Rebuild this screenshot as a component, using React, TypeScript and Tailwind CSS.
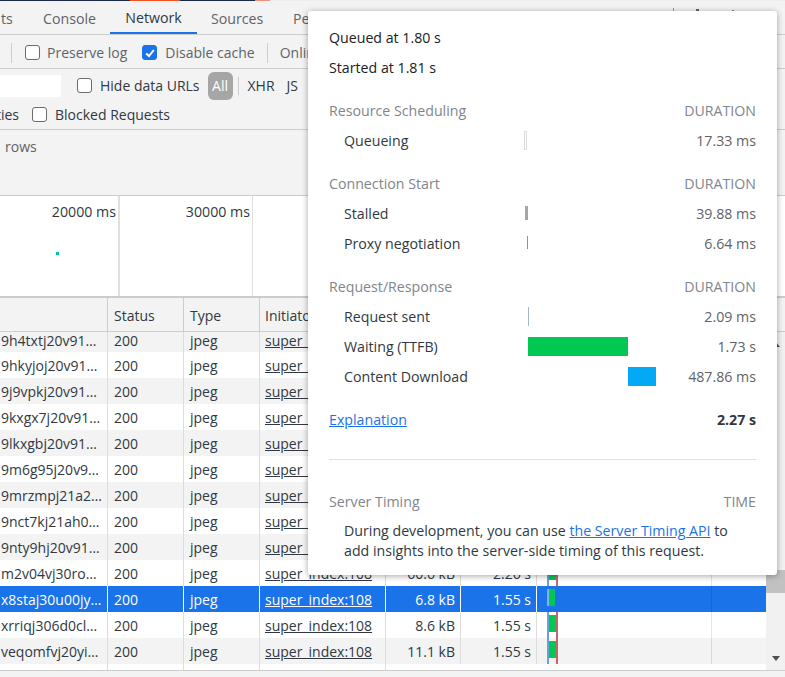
const rows = [
  { name: '9h4txtj20v91…', size: '', time: '' },
  { name: '9hkyjoj20v91…' },
  { name: '9j9vpkj20v91…' },
  { name: '9kxgx7j20v91…' },
  { name: '9lkxgbj20v91…' },
  { name: '9m6g95j20v9…' },
  { name: '9mrzmpj21a2…' },
  { name: '9nct7kj21ah0…' },
  { name: '9nty9hj20v91…' },
  { name: 'm2v04vj30ro…', size: '60.6 kB', time: '2.26 s' },
  { name: 'x8staj30u00jy…', size: '6.8 kB', time: '1.55 s', selected: true },
  { name: 'xrriqj306d0cl…', size: '8.6 kB', time: '1.55 s' },
  { name: 'veqomfvj20yi…', size: '11.1 kB', time: '1.55 s' },
];

function TableRow({ row, index }: { row: (typeof rows)[number]; index: number }) {
  const selected = row.selected;
  const bg = selected ? 'bg-[#1a73e8] text-white' : index % 2 === 0 ? 'bg-[#f3f3f3] text-[#303942]' : 'bg-white text-[#303942]';
  const line = selected ? 'border-white' : 'border-[#ddd]';
  // first row is scrolled partly under the header
  const height = index === 0 ? 'h-[20px] leading-[18px]' : 'h-[26px] leading-[28px]';

  return (
    <div className={`flex overflow-hidden text-[14px] ${height} ${bg}`}>
      <div className={`h-full w-[108px] truncate border-r ${line} pl-px`}>{row.name}</div>
      <div className={`h-full w-[76px] border-r ${line} pl-[6px]`}>200</div>
      <div className={`h-full w-[76px] border-r ${line} pl-[6px]`}>jpeg</div>
      <div className={`h-full w-[126px] border-r ${line} pl-[5px] underline`}>super_index:108</div>
      <div className={`h-full w-[75px] border-r ${line} pr-[5px] text-right`}>{row.size}</div>
      <div className={`h-full w-[76px] border-r ${line} pr-[5px] text-right`}>{row.time}</div>
      <div className="relative h-full w-[229px]">
        {selected ? (
          <>
            <div className="absolute top-[3px] left-[10px] h-[17px] w-[2px] bg-[#7fb2ee]" />
            <div className="absolute top-[3px] left-[12px] h-[17px] w-[6px] bg-[#00c853]" />
          </>
        ) : (
          <>
            <div className="absolute top-[3px] left-[11px] h-[17px] w-[7px] bg-[#00c853]" />
            <div className="absolute top-[3px] left-[18px] h-[17px] w-px bg-[#03a9f4]" />
            <div className="absolute inset-y-0 left-[10px] w-[2px] bg-[#6a9fdc]" />
            <div className="absolute inset-y-0 left-[19px] w-[2px] bg-[#c9636b]" />
          </>
        )}
        <div className="absolute inset-y-0 left-[174px] w-px bg-black/10" />
      </div>
    </div>
  );
}

function Timing({ label, value, bar }: { label: string; value: string; bar: string }) {
  return (
    <div className="flex h-[30px] items-center">
      <div className="w-[196px] pl-[15px] pt-[2px]">{label}</div>
      <div className="h-[19px] w-[140px]">
        <div className={`h-full ${bar}`} />
      </div>
      <div className="flex-1 pt-[2px] text-right text-[#5f6368]">{value}</div>
    </div>
  );
}

function Section({ title, right = 'DURATION' }: { title: string; right?: string }) {
  return (
    <div className="flex h-[30px] items-center pt-[2px] text-[#80868b]">
      <div className="flex-1">{title}</div>
      <div>{right}</div>
    </div>
  );
}

function Box({ checked }: { checked?: boolean }) {
  return (
    <span className={`mr-[8px] flex h-[15px] w-[15px] shrink-0 items-center justify-center rounded-[3px] border ${checked ? 'border-[#1a73e8] bg-[#1a73e8]' : 'border-[#6b6b6b] bg-white'}`}>
      {checked && (
        <svg viewBox="0 0 12 12" className="h-[12px] w-[12px]">
          <path d="M2.2 6.4 5 9l4.8-6" fill="none" stroke="white" strokeWidth="2" />
        </svg>
      )}
    </span>
  );
}

export default function App() {
  return (
    <div className="relative h-[677px] w-[785px] overflow-hidden bg-[#f3f3f3] font-['Open_Sans','Noto_Sans',sans-serif] text-[14.2px] text-[#303942]">
      <div className="flex h-px bg-[#eeeef2]">
        <div className="w-[130px] bg-[#1b2a4a]" />
        <div className="w-[50px] bg-[#f4511e]" />
        <div className="w-[75px] bg-[#1b2a4a]" />
        <div className="w-[15px] bg-[#f0907a]" />
      </div>

      <div className="relative flex h-[34px] items-center border-b border-[#ccc] pt-[2px] text-[#5f6368]">
        <span className="w-[43px] pl-px">ts</span>
        <span className="w-[67px]">Console</span>
        <span className="flex h-full w-[87px] items-center justify-center border-b-[2px] border-[#1a73e8] text-[#303942]">Network</span>
        <span className="ml-[14px] w-[82px]">Sources</span>
        <span>Performance</span>
        <span className="absolute top-[7px] left-[673px] h-[3px] w-px bg-[#999]" />
        <span className="absolute top-[8px] left-[696px] h-[2px] w-[3px] bg-[#666]" />
        <span className="absolute top-[9px] left-[732px] h-px w-[2px] bg-[#888]" />
      </div>

      <div className="flex h-[34px] items-center border-b border-[#ccc] pt-[2px] text-[14px] text-[#5f6368]">
        <span className="mr-[13px] ml-[11px] h-[20px] w-px bg-[#ccc]" />
        <Box />
        <span className="-ml-px">Preserve log</span>
        <span className="w-[15px]" />
        <Box checked />
        <span>Disable cache</span>
        <span className="mx-[12px] h-[20px] w-px bg-[#ccc]" />
        <span>Online</span>
      </div>

      <div className="flex h-[33px] items-center text-[14px]">
        <div className="mr-[16px] h-[22px] w-[61px] bg-white" />
        <Box />
        <span>Hide data URLs</span>
        <span className="mr-[5px] ml-[8px] flex h-[28px] w-[25px] items-center justify-center rounded-[6px] bg-[#a6a6a6] text-white">All</span>
        <span className="mr-[9px] h-[18px] w-px bg-[#ccc]" />
        <span className="mr-[12px]">XHR</span>
        <span>JS</span>
      </div>

      <div className="flex h-[28px] items-center border-b border-[#ccc] pb-[3px] text-[14px]">
        <span className="mr-[13px] flex w-[19px] justify-end overflow-hidden whitespace-nowrap">ties</span>
        <Box />
        <span>Blocked Requests</span>
      </div>

      <div className="h-[66px] border-b border-[#ccc] pl-[5px] pt-[6px] text-[14px] text-[#5f6368]">rows</div>

      <div className="flex h-[102px] border-b-[2px] border-[#ccc] bg-white">
        <div className="relative w-[120px] border-r-[2px] border-[#e0e0e0] pr-[2px] pt-[5px] text-right">
          20000 ms
          <span className="absolute top-[56px] left-[56px] h-[3px] w-[3px] bg-[#00bfa5]" />
        </div>
        <div className="w-[133px] border-r border-[#e0e0e0] pr-[2px] pt-[5px] text-right">30000 ms</div>
        <div className="flex-1" />
      </div>

      <div className="flex">
        <div className="w-[766px]">
          <div className="flex h-[34px] border-b border-[#ccc] bg-[#f3f3f3] text-[14px] leading-[36px]">
            <div className="h-full w-[108px] border-r border-[#ccc]" />
            <div className="h-full w-[76px] border-r border-[#ccc] pl-[6px]">Status</div>
            <div className="h-full w-[76px] border-r border-[#ccc] pl-[6px]">Type</div>
            <div className="h-full w-[126px] border-r border-[#ccc] pl-[5px]">Initiator</div>
          </div>
          {rows.map((row, i) => (
            <TableRow key={row.name} row={row} index={i} />
          ))}
          <div className="flex h-[6px] bg-white">
            <div className="w-[108px] border-r border-[#ddd]" />
            <div className="w-[76px] border-r border-[#ddd]" />
            <div className="w-[76px] border-r border-[#ddd]" />
            <div className="w-[126px] border-r border-[#ddd]" />
          </div>
        </div>
        <div className="flex w-[19px] flex-col bg-[#f1f1f1]">
          <div className="h-[34px] border-b border-[#ccc] bg-[#f3f3f3]" />
          <div className="flex h-[24px] items-center justify-center">
            <span className="h-0 w-0 border-x-[4px] border-b-[5px] border-x-transparent border-b-[#505050]" />
          </div>
          <div className="mt-[214px] h-[23px] bg-[#c1c1c1]" />
          <div className="flex-1" />
          <div className="flex h-[24px] items-center justify-center">
            <span className="h-0 w-0 border-x-[4px] border-t-[5px] border-x-transparent border-t-[#505050]" />
          </div>
        </div>
      </div>

      <div className="h-[7px] border-t border-[#ccc] bg-[#f3f3f3]" />

      <div className="absolute top-[11px] left-[308px] h-[564px] w-[469px] rounded-[3px] bg-white px-[21px] pt-[11px] text-[#303942] shadow-[0_1px_6px_rgba(0,0,0,0.35)]">
        <div className="flex h-[30px] items-center pt-[2px] text-[#202124]">Queued at 1.80 s</div>
        <div className="flex h-[30px] items-center pt-[2px] text-[#202124]">Started at 1.81 s</div>
        <div className="h-[13px]" />
        <Section title="Resource Scheduling" />
        <Timing label="Queueing" value="17.33 ms" bar="-ml-px w-[3px] border border-[#dcdcdc]" />
        <div className="h-[13px]" />
        <Section title="Connection Start" />
        <Timing label="Stalled" value="39.88 ms" bar="mt-[2px] !h-[14px] w-[3px] bg-[#a6a6a6]" />
        <Timing label="Proxy negotiation" value="6.64 ms" bar="mt-[2px] ml-[2px] !h-[13px] w-px bg-[#9e8e85]" />
        <div className="h-[13px]" />
        <Section title="Request/Response" />
        <Timing label="Request sent" value="2.09 ms" bar="ml-[3px] w-px bg-[#a3b8c6]" />
        <Timing label="Waiting (TTFB)" value="1.73 s" bar="ml-[3px] w-[100px] bg-[#00c853]" />
        <Timing label="Content Download" value="487.86 ms" bar="ml-[103px] w-[28px] bg-[#03a9f4]" />
        <div className="flex h-[68px] items-start justify-between pt-[18px]">
          <a className="text-[#1a73e8] underline">Explanation</a>
          <b className="font-bold text-[#303942]">2.27 s</b>
        </div>
        <div className="h-px bg-[#e0e0e0]" />
        <div className="h-[26px]" />
        <Section title="Server Timing" right="TIME" />
        <div className="pl-[15px] pt-[5px] leading-[20px] text-[#303942]">
          During development, you can use <a className="text-[#1a73e8] underline">the Server Timing API</a> to
          <br />
          add insights into the server-side timing of this request.
        </div>
      </div>
    </div>
  );
}
